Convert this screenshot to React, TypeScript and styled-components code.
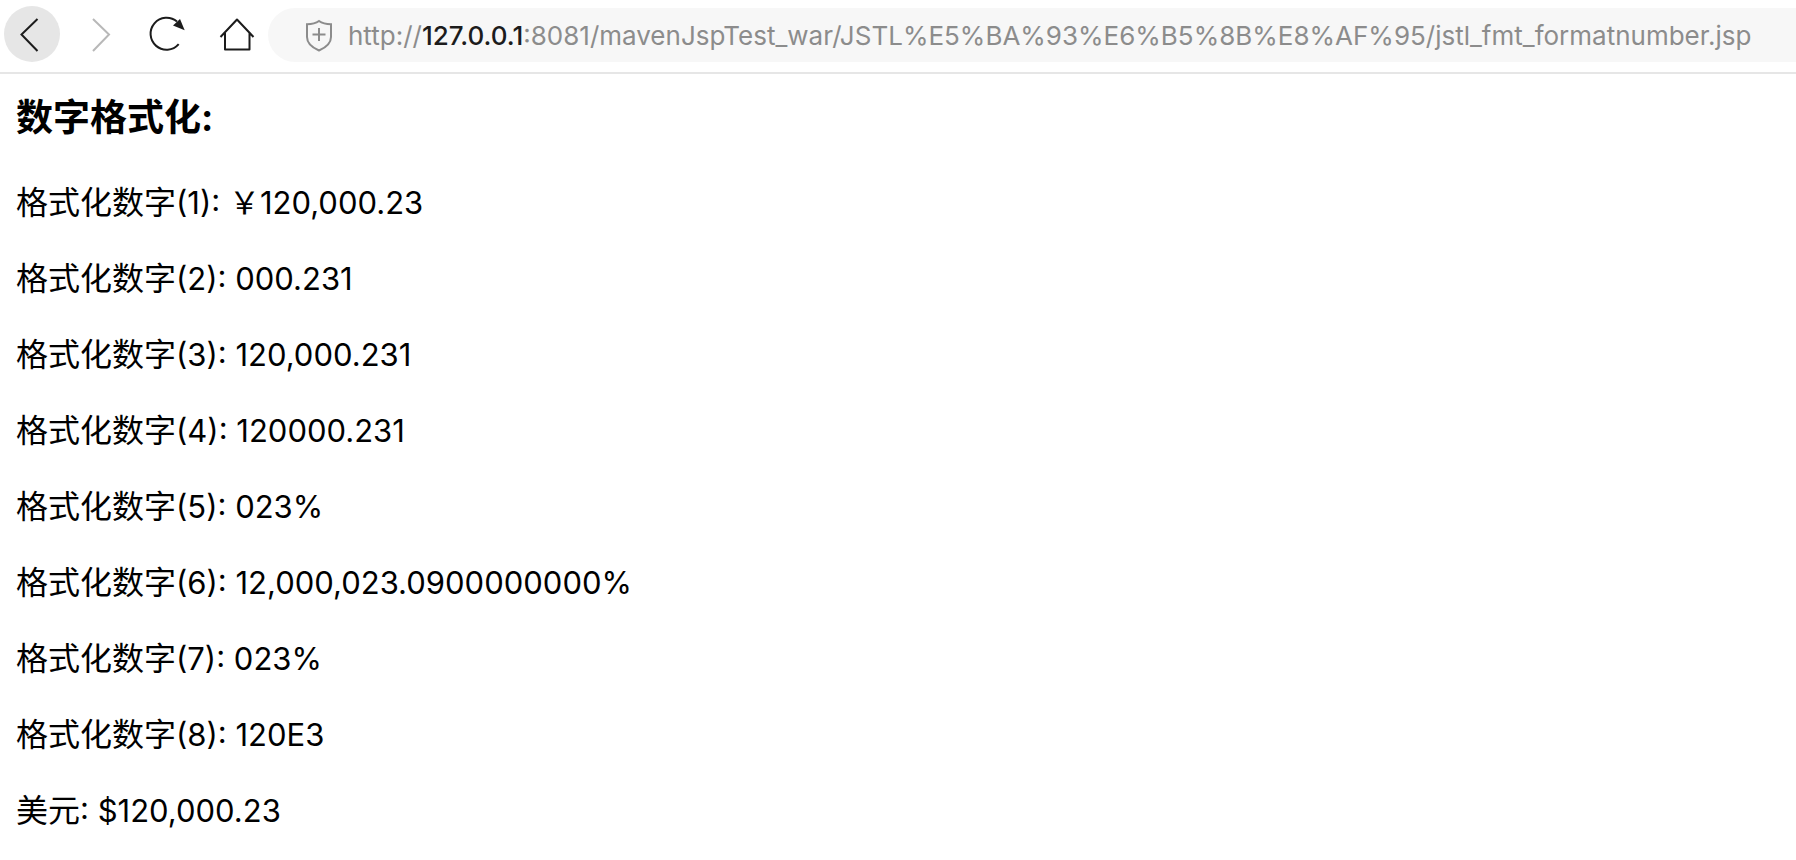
import React from 'react';
import styled, { createGlobalStyle } from 'styled-components';

const Global = createGlobalStyle`
  body {
    margin: 0;
    background: #fff;
    color: #000;
    font-family: Inter, "Noto Sans CJK SC", sans-serif;
  }
`;

const Toolbar = styled.header`
  display: flex;
  align-items: flex-end;
  gap: 4px;
  padding: 6px 0 10px 4px;
  border-bottom: 2px solid #e6e6e6;
`;

const Nav = styled.nav`
  display: flex;
  flex: none;
  gap: 12px;
`;

const NavButton = styled.button<{ $highlighted?: boolean }>`
  width: 56px;
  height: 56px;
  padding: 0;
  border: 0;
  border-radius: 50%;
  background: ${(p) => (p.$highlighted ? '#e6e6e6' : 'transparent')};
  color: #1c1c1c;

  &:disabled {
    color: #b8b8b8;
  }
`;

const Icon = styled.svg`
  display: block;
  flex: none;
  fill: none;
  stroke: currentColor;
  stroke-width: 2;
`;

const AddressBar = styled.div`
  display: flex;
  flex: 1;
  align-items: center;
  gap: 14px;
  min-width: 0;
  height: 54px;
  padding-left: 38px;
  box-sizing: border-box;
  border-radius: 27px 0 0 27px;
  background: #f7f7f7;
  color: #8c8c8c;
`;

const Address = styled.div`
  flex: 1;
  min-width: 0;
  padding-top: 2px;
  overflow: hidden;
  outline: 0;
  font-size: 26px;
  line-height: 40px;
  white-space: nowrap;
`;

const Host = styled.span`
  color: #1c1c1c;
  font-weight: 500;
`;

const Content = styled.main`
  padding: 20px 16px 0;
`;

const Title = styled.h3`
  margin: 0 0 39px;
  font-size: 37px;
  line-height: 48px;
`;

const Line = styled.p`
  margin: 0 0 32px;
  font-size: 31px;
  line-height: 44px;
`;

const Name = styled.span`
  font-size: 32px;
`;

const rows = [
  { name: '格式化数字', index: '(1)', value: '\uFFE5120,000.23' },
  { name: '格式化数字', index: '(2)', value: '000.231' },
  { name: '格式化数字', index: '(3)', value: '120,000.231' },
  { name: '格式化数字', index: '(4)', value: '120000.231' },
  { name: '格式化数字', index: '(5)', value: '023%' },
  { name: '格式化数字', index: '(6)', value: '12,000,023.0900000000%' },
  { name: '格式化数字', index: '(7)', value: '023%' },
  { name: '格式化数字', index: '(8)', value: '120E3' },
  { name: '美元', index: '', value: '$120,000.23' },
];

export default function App() {
  return (
    <>
      <Global />
      <Toolbar>
        <Nav aria-label="Browser">
          <NavButton type="button" aria-label="Back" $highlighted>
            <Icon width="56" height="56" viewBox="0 0 56 56">
              <path d="M33.5 13 17.5 28.5l16 16.5" />
            </Icon>
          </NavButton>
          <NavButton type="button" aria-label="Forward" disabled>
            <Icon width="56" height="56" viewBox="0 0 56 56">
              <path d="M21 13l16 15.5L21 45" />
            </Icon>
          </NavButton>
          <NavButton type="button" aria-label="Reload">
            <Icon width="56" height="56" viewBox="0 0 56 56">
              <path d="M38.7 38.2A16 16 0 1 1 37 15.600" />
              <path d="M40 13l4.700 11.200L33 19.500z" fill="currentColor" stroke="none" />
            </Icon>
          </NavButton>
          <NavButton type="button" aria-label="Home">
            <Icon width="56" height="56" viewBox="0 0 56 56" strokeLinejoin="round">
              <path d="M12.500 31 29 13.500 45.500 31M17 27v16.500h24.500V27" />
            </Icon>
          </NavButton>
        </Nav>
        <AddressBar>
          <Icon width="28" height="34" viewBox="0 0 28 34" aria-hidden="true">
            <path d="M13 3c3 2.200 7 3.200 12 3.200V19c0 7-5 10.500-12 13.500C6 29.500 1 26 1 19V6.200C6 6.200 10 5.200 13 3z" />
            <path d="M13 10v13M6.500 16.500h13" />
          </Icon>
          <Address
            role="textbox"
            aria-label="Address"
            contentEditable
            suppressContentEditableWarning
            spellCheck={false}
          >
            http://<Host>127.0.0.1</Host>
            :8081/mavenJspTest_war/JSTL%E5%BA%93%E6%B5%8B%E8%AF%95/jstl_fmt_formatnumber.jsp
          </Address>
        </AddressBar>
      </Toolbar>
      <Content>
        <Title>数字格式化:</Title>
        {rows.map((row) => (
          <Line key={row.name + row.index}>
            <Name>{row.name}</Name>
            {row.index}: {row.value}
          </Line>
        ))}
      </Content>
    </>
  );
}
